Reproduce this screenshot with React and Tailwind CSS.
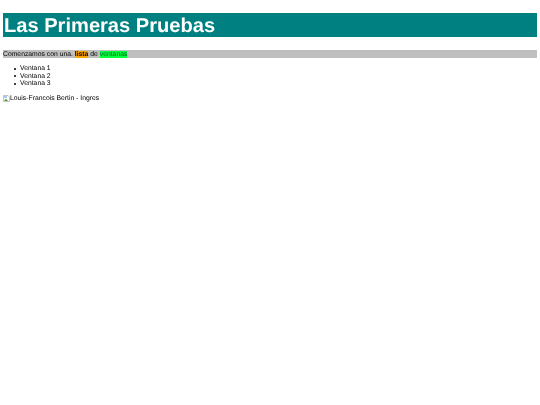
const items = ["Ventana 1", "Ventana 2", "Ventana 3"];

export default function App() {
  return (
    <div className="min-h-[405px] bg-white px-[3px] pt-[13px] text-[6.8px] leading-[8px] text-black blur-[0.3px] [text-rendering:geometricPrecision]" style={{ fontFamily: '"Liberation Sans", Arial, sans-serif' }}>
      <h1 className="h-[24px] bg-[#008080] pl-px text-[20.1px] leading-[26px] font-bold text-white">Las Primeras Pruebas</h1>
      <p className="mt-[13px] h-[8px] bg-[#bfbfbf] leading-[9px]">
        Comenzamos con una. <strong className="bg-[#ffa500] font-bold">lista</strong> de <span className="bg-[#00ff40] text-[#006020]">ventanas</span>
      </p>
      <ul className="mt-[6px] flex list-none flex-col pl-[11px] pt-[1px]">
        {items.map((item) => (
          <li key={item} className="flex h-[7.6px] items-center gap-[4px] leading-[7.6px]">
            <span className="size-[2px] shrink-0 rounded-full bg-black" />
            {item}
          </li>
        ))}
      </ul>
      <div className="mt-[6.5px] flex h-[8px] items-center">
        <svg width="7" height="7" viewBox="0 0 7 7" className="shrink-0">
          <path d="M0.5 0.5H5L6.5 2V6.5H0.5Z" fill="#fff" stroke="#9a9a9a" strokeWidth="0.6" />
          <path d="M1 6L3 3.5L5 6Z" fill="#5a9a4a" />
          <path d="M1 1H4V3H1Z" fill="#a9c6ee" />
        </svg>
        <span className="pt-[0.5px]">Louis-Francois Bertin - Ingres</span>
      </div>
    </div>
  );
}
